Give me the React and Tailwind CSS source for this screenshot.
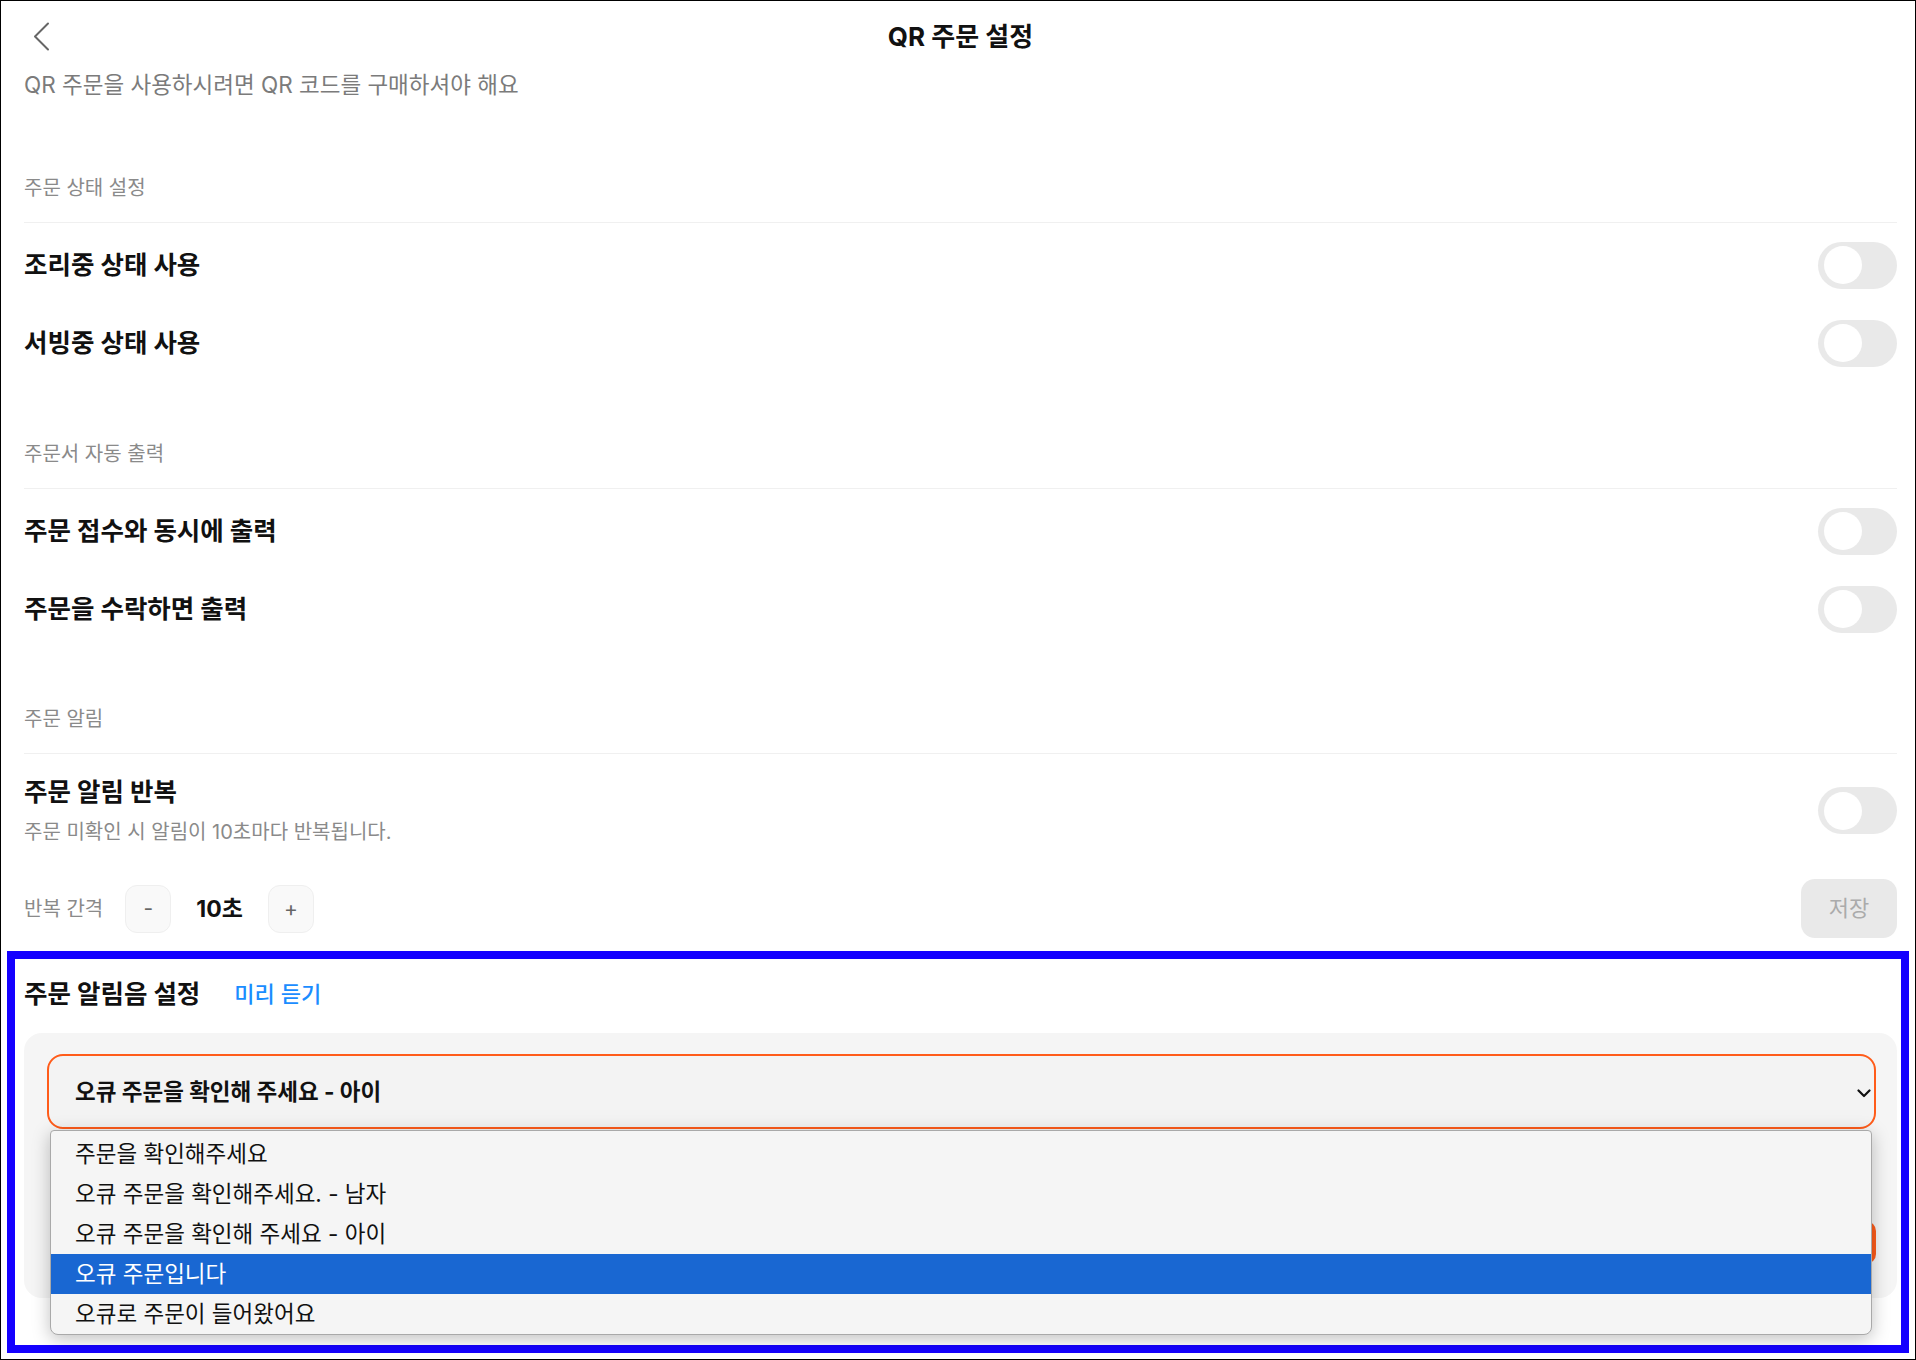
import React from 'react';
import clsx from 'clsx';

const SOUNDS = [
  '주문을 확인해주세요',
  '오큐 주문을 확인해주세요. - 남자',
  '오큐 주문을 확인해 주세요 - 아이',
  '오큐 주문입니다',
  '오큐로 주문이 들어왔어요',
];

const Toggle = () => (
  <div className="flex h-[47px] w-[79px] shrink-0 items-center rounded-full bg-[#e9e9e9] px-[6px]">
    <div className="h-[38px] w-[38px] rounded-full bg-white" />
  </div>
);

const SectionHeader = ({ children, className }) => (
  <div className={className}>
    <div className="text-[20px] leading-[24px] text-[#8a8a8a]">{children}</div>
    <div className="mt-[22px] h-px bg-[#f0f0f0]" />
  </div>
);

const ToggleRow = ({ label }) => (
  <div className="flex h-[78px] items-center justify-between">
    <span className="text-[25.5px] font-bold leading-[30px] text-[#111]">{label}</span>
    <Toggle />
  </div>
);

const StepButton = ({ children }) => (
  <button
    type="button"
    className="flex h-[48px] w-[46px] items-center justify-center rounded-[12px] border border-[#efefef] bg-[#f9f9f9] text-[21px] text-[#666]"
  >
    {children}
  </button>
);

const App = () => {
  const selected = 3;

  return (
    <div className="relative h-[1360px] w-[1916px] overflow-hidden border border-black bg-white [font-family:Inter,'Noto_Sans_CJK_KR',sans-serif]">
      <div className="pl-[23px] pr-[18px]">
        {/* header */}
        <div className="relative flex h-[72px] items-center justify-center">
          <button type="button" className="absolute left-[9px] top-[21px] text-[#666]">
            <svg width="17" height="29" viewBox="0 0 17 29" fill="none">
              <path d="M15 1.5L2 14.5L15 27.5" stroke="currentColor" strokeWidth="2" strokeLinecap="round" strokeLinejoin="round" />
            </svg>
          </button>
          <h1 className="text-[26px] font-bold leading-[30px] text-[#111]">QR 주문 설정</h1>
        </div>
        <p className="h-[24px] text-[22.5px] leading-[24px] text-[#7b7b7b]">
          QR 주문을 사용하시려면 QR 코드를 구매하셔야 해요
        </p>

        <SectionHeader className="mt-[79px]">주문 상태 설정</SectionHeader>
        <div className="pt-[3px]">
          <ToggleRow label="조리중 상태 사용" />
          <ToggleRow label="서빙중 상태 사용" />
        </div>

        <SectionHeader className="mt-[60px]">주문서 자동 출력</SectionHeader>
        <div className="pt-[3px]">
          <ToggleRow label="주문 접수와 동시에 출력" />
          <ToggleRow label="주문을 수락하면 출력" />
        </div>

        <SectionHeader className="mt-[59px]">주문 알림</SectionHeader>
        <div className="flex items-center justify-between pt-[24px]">
          <div>
            <div className="text-[25.5px] font-bold leading-[28px] text-[#111]">주문 알림 반복</div>
            <div className="mt-[15px] text-[20px] leading-[22px] text-[#8a8a8a]">
              주문 미확인 시 알림이 10초마다 반복됩니다.
            </div>
          </div>
          <Toggle />
        </div>

        <div className="mt-[36px] flex h-[59px] items-center">
          <span className="text-[20px] leading-[24px] text-[#8a8a8a]">반복 간격</span>
          <div className="ml-[22px] flex items-center gap-[25px]">
            <StepButton>-</StepButton>
            <span className="text-[23px] font-bold leading-[28px] text-[#111]">10초</span>
            <StepButton>+</StepButton>
          </div>
          <button
            type="button"
            className="ml-auto flex h-[59px] w-[96px] items-center justify-center rounded-[14px] bg-[#e9e9e9] text-[22px] text-[#ababab]"
          >
            저장
          </button>
        </div>

        {/* notification sound */}
        <div className="mt-[41px] flex h-[30px] items-center gap-[34px]">
          <span className="text-[25.5px] font-bold leading-[30px] text-[#111]">주문 알림음 설정</span>
          <button type="button" className="text-[22px] font-medium leading-[28px] text-[#1a8dff]">
            미리 듣기
          </button>
        </div>

        <div className="mt-[24px] rounded-[18px] bg-[#f5f5f5] pb-[34px] pl-[23px] pr-[21px] pt-[21px]">
          <div className="relative flex h-[75px] items-center rounded-[16px] border-2 border-[#ff5c1a] bg-[#f3f3f3] pl-[26px]">
            <span className="text-[22.5px] font-bold leading-[28px] text-[#111]">{SOUNDS[2]}</span>
            <svg className="absolute right-[3px] top-[33px]" width="14" height="9" viewBox="0 0 14 9" fill="none">
              <path d="M1.5 1.5L7 7L12.5 1.5" stroke="#111" strokeWidth="2.2" strokeLinecap="round" strokeLinejoin="round" />
            </svg>

            {/* open native-style option list */}
            <div className="absolute left-[1px] right-[2px] top-[74px] z-10 rounded-b-[8px] rounded-t-[4px] border border-[#a9a9a9] bg-[#f5f5f5] pt-[3px] shadow-[0_4px_18px_rgba(0,0,0,0.25)]">
              {SOUNDS.map((s, i) => (
                <div
                  key={s}
                  className={clsx(
                    'flex h-[40px] items-center pl-[24px] text-[22.5px] leading-[28px]',
                    i === selected ? 'bg-[#1967d2] text-white' : 'text-[#111]'
                  )}
                >
                  {s}
                </div>
              ))}
            </div>
          </div>

          <div className="mt-[92px] flex justify-end">
            <div className="h-[43px] w-[120px] rounded-[10px] bg-[#ff5c1a]" />
          </div>
        </div>
      </div>

      {/* highlight frame */}
      <div className="pointer-events-none absolute left-[6px] top-[950px] h-[402px] w-[1902px] border-[8px] border-[#1400ff]" />
    </div>
  );
};

export default App;
